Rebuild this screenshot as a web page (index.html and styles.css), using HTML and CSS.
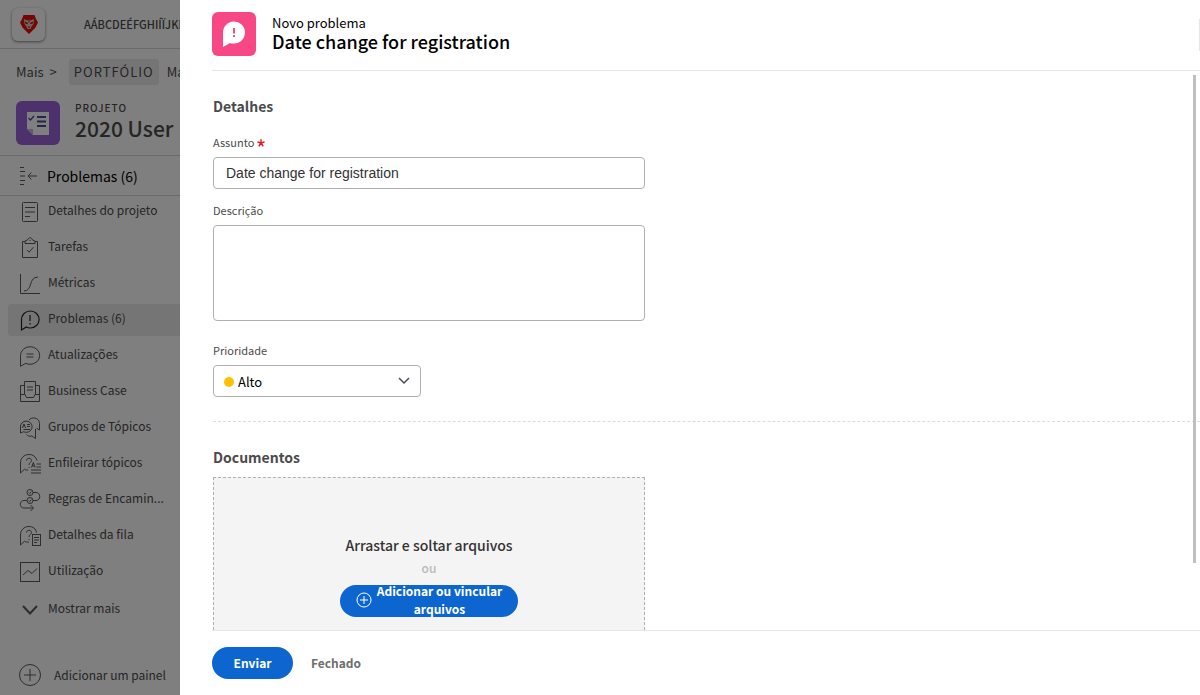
FILE: index.html
```html
<!DOCTYPE html>
<html lang="pt-BR">
<head>
<meta charset="utf-8">
<title>Novo problema</title>
<link rel="stylesheet" href="styles.css">
</head>
<body>
<div class="app">
  <aside class="page">
    <header class="topbar">
      <div class="logo">
        <svg width="18" height="20" viewBox="0 0 18 20"><path d="M3.500 1h11l1.500 4 2 3.500-2.500 5L9 20l-6.500-6.500L0 8.500 2 5z" fill="#e80c0c"/><path d="M4 5l3 1.500L9 5.500l2 1L14 5l-.5 5-2 2.500-1 2.500h-3l-1-2.500-2-2.500z" fill="#dccaca"/><path d="M4.800 7.500L8 9l-.5 1.200-2.300-.8zM13.200 7.500L10 9l.5 1.200 2.300-.8zM7.500 12.500h3L9 14.300zM8.400 5.500h1.200L9.300 9h-.6z" fill="#c80c0c"/></svg>
      </div>
      <span class="org">AÁBCDEÉFGHIÍÏJKL</span>
    </header>
    <nav class="crumbs" aria-label="Trilha">
      <a href="#">Mais</a><span class="sep">&gt;</span><a href="#" class="crumb-chip">PORTFÓLIO</a><a href="#">Ma</a>
    </nav>
    <div class="project">
      <div class="project-icon">
        <svg width="44" height="44" viewBox="0 0 44 44"><path d="M11 11h22v23H17l-6-6z" fill="#fff"/><path d="M11 28h6v6z" fill="#c9b0ee"/><path d="M12.500 17l2 2 3.500-4" fill="none" stroke="#4b4b9c" stroke-width="1.400"/><path d="M21 16h9M21 20.500h9M21 25h9" stroke="#4b4b9c" stroke-width="1.800"/></svg>
      </div>
      <div>
        <div class="project-kind">PROJETO</div>
        <div class="project-name">2020 User</div>
      </div>
    </div>
    <div class="section-head">
      <svg width="20" height="20" viewBox="0 0 20 20" class="ico"><path d="M1 1.500h4M1 5.500h5M1 10h5M1 14.500h5M1 18.500h4M18 10H9.500M12.500 6.500L9 10l3.500 3.500"/></svg>
      <span>Problemas (6)</span>
    </div>
    <nav class="menu">
      <a href="#"><svg class="ico" width="22" height="22" viewBox="0 0 22 22"><rect x="3.500" y="1.500" width="15" height="19" rx="1"/><path d="M6 6.500h10M6 11h10M6 15.500h5"/></svg><span>Detalhes do projeto</span></a>
      <a href="#"><svg class="ico" width="22" height="22" viewBox="0 0 22 22"><path d="M6 4.500H3.500v16h15v-16H16M6 6.500V4l2.500-1C9 1.500 10 .8 11 .8s2 .7 2.500 2.200L16 4v2.500zM8 13l2 2.200 4.500-5M11 3v1"/></svg><span>Tarefas</span></a>
      <a href="#"><svg class="ico" width="22" height="22" viewBox="0 0 22 22"><path d="M1.500 1v19.500H21M5 18c9 0 4-14 14-14"/></svg><span>Métricas</span></a>
      <a href="#" class="active"><svg class="ico" width="22" height="22" viewBox="0 0 22 22"><path d="M2.500 21V10.500a8.800 8.500 0 1 1 8.800 8.500c-1.600 0-2.800-.3-4-1zM11 6v6M11 14v1.500"/></svg><span>Problemas (6)</span></a>
      <a href="#"><svg class="ico" width="22" height="22" viewBox="0 0 22 22"><path d="M1.500 21.300V10.500a9.600 8.800 0 1 1 9.600 8.800c-1.700 0-3-.3-4.300-1zM7.500 9h7M7.500 12h7"/></svg><span>Atualizações</span></a>
      <a href="#"><svg class="ico" width="22" height="22" viewBox="0 0 22 22"><path d="M5.500 4.500h-4v16h19v-16h-4M1.500 13.500H6l1.500 3h7l1.500-3h4.500M5.500 13.500v-13h11v13M8 6h6M8 9h6"/></svg><span>Business Case</span></a>
      <a href="#"><svg class="ico" width="22" height="22" viewBox="0 0 22 22"><path d="M1.500 16V10a5.800 5.600 0 1 1 6 5.300c-1.200 0-1.800-.1-2.800-.6zM10 3c2-3.300 10.500-3 10.500 3.500V13l-3-1.800M16.500 12v9.500l-3.500-2.500c-2.500.5-4.500 0-5.500-1.500M3.500 11l1.500-4 1.500 4M8 7.500h3M8 9.500h3M4.500 12.500H11"/></svg><span>Grupos de Tópicos</span></a>
      <a href="#"><svg class="ico" width="22" height="22" viewBox="0 0 22 22"><path d="M9 17c-1.300.2-2.500 0-3.500-.8L1.500 20V10c0-5 3.500-8.500 8.500-8.500 4 0 7 2.300 8 6M7.500 7.500c0-3 5-3 5 0 0 2-2.500 2-2.500 4.500M10 14v1M12.500 14.500l1.800-5 1.800 5M13 13h2.500M17.500 11h4.500M17.500 14h4.500M12 17h10M12 20h10"/></svg><span>Enfileirar tópicos</span></a>
      <a href="#"><svg class="ico" width="22" height="22" viewBox="0 0 22 22"><circle cx="11" cy="3.500" r="3"/><circle cx="11" cy="11.500" r="3"/><path d="M9.800 3.500l1 1 1.500-2M9.800 11.500l1 1 1.500-2M14 3.500h3c5 0 5 8 0 8h-3M8 11.500H5c-5 0-5 7.500 0 7.500h9M11.500 16l3 3-3 3"/></svg><span>Regras de Encamin...</span></a>
      <a href="#"><svg class="ico" width="22" height="22" viewBox="0 0 22 22"><path d="M10 17c-1.500.3-3.300 0-4.500-.8L1.500 20V10c0-5 3.500-8.500 8.500-8.500 4 0 7 2.300 7.500 6M7.500 7.500c0-3 5-3 5 0 0 2-2.500 2-2.500 4.500M10 14v1"/><rect x="13.500" y="9.500" width="8" height="11"/><path d="M15 12.500h5M15 15h5M15 17.500h3"/></svg><span>Detalhes da fila</span></a>
      <a href="#"><svg class="ico" width="22" height="22" viewBox="0 0 22 22"><rect x="1.500" y="1.500" width="19" height="19"/><path d="M4 14l5-4.500 4 3 5-5"/></svg><span>Utilização</span></a>
      <a href="#" class="more"><svg class="ico ico-bold" width="22" height="22" viewBox="0 0 22 22"><path d="M4 7l7 7.500L18 7"/></svg><span>Mostrar mais</span></a>
    </nav>
    <button type="button" class="add-panel"><svg class="ico" width="24" height="24" viewBox="0 0 24 24"><circle cx="12" cy="12" r="10.500"/><path d="M12 6v12M6 12h12"/></svg><span>Adicionar um painel</span></button>
  </aside>

  <main class="dialog" role="dialog" aria-labelledby="dlg-title">
    <header class="dialog-head">
      <div class="issue-icon">
        <svg width="44" height="44" viewBox="0 0 44 44"><path d="M11 35V21a11 11 0 1 1 11 10.500c-2 0-3-.1-4-.5z" fill="#fff"/><path d="M22 16v5.500M22 23v2" stroke="#e8586a" stroke-width="2"/></svg>
      </div>
      <div>
        <div class="eyebrow">Novo problema</div>
        <h1 id="dlg-title">Date change for registration</h1>
      </div>
      <span class="head-edge"></span>
    </header>
    <form class="dialog-form">
      <div class="scroll">
        <section class="details">
          <h2>Detalhes</h2>
          <div class="field">
            <label for="subject">Assunto <svg class="req" width="8" height="8" viewBox="0 0 8 8"><path d="M4 4V.2M4 4L.4 2.900M4 4l3.600-1.100M4 4L1.800 7.400M4 4l2.200 3.400"/></svg></label>
            <input id="subject" type="text" value="Date change for registration">
          </div>
          <div class="field">
            <label for="desc">Descrição</label>
            <textarea id="desc"></textarea>
          </div>
          <div class="field">
            <label for="prio">Prioridade</label>
            <div class="select">
              <select id="prio"><option>Alto</option></select>
              <span class="dot"></span>
              <svg class="chev" width="12" height="8" viewBox="0 0 12 8"><path d="M1 1l5 5 5-5"/></svg>
            </div>
          </div>
        </section>
        <section class="documents">
          <h2>Documentos</h2>
          <div class="drop">
            <p class="drop-title">Arrastar e soltar arquivos</p>
            <p class="drop-or">ou</p>
            <button type="button" class="add-files"><svg width="16" height="16" viewBox="0 0 16 16"><circle cx="8" cy="8" r="7"/><path d="M8 4v8M4 8h8"/></svg><span>Adicionar ou vincular arquivos</span></button>
          </div>
        </section>
        <span class="thumb"></span>
      </div>
      <footer class="actions">
        <button type="submit" class="primary">Enviar</button>
        <button type="button" class="quiet">Fechado</button>
      </footer>
    </form>
  </main>
</div>
</body>
</html>
```
FILE: styles.css
```css
* { box-sizing: border-box; }
body {
  margin: 0;
  font-family: "Noto Sans CJK SC", "Noto Sans", sans-serif;
  font-size: 13px;
  line-height: 18px;
  color: #4b4b4b;
  background: #fff;
}
h1, h2, p { margin: 0; }
a { color: inherit; text-decoration: none; }
button, input, textarea, select { font: inherit; margin: 0; }
.app { display: flex; height: 100vh; overflow: hidden; }

/* dimmed page under the dialog */
.page {
  position: relative;
  flex: 0 0 180px;
  display: flex;
  flex-direction: column;
  overflow: hidden;
  white-space: nowrap;
}
.page::after {
  content: "";
  position: absolute;
  inset: 0;
  background: rgba(0, 0, 0, 0.5);
}
.topbar {
  display: flex;
  align-items: center;
  gap: 39px;
  height: 49px;
  padding-left: 12px;
  border-bottom: 1px solid #d4d4d4;
}
.logo {
  flex: none;
  display: grid;
  place-items: center;
  width: 33px;
  height: 33px;
  border-radius: 6px;
  box-shadow: 0 1px 3px rgba(0, 0, 0, 0.5);
}
.org { font-size: 11px; font-weight: 500; }
.crumbs {
  display: flex;
  align-items: center;
  height: 46px;
  padding-left: 16px;
}
.sep { margin: 0 12px 0 6px; }
.crumb-chip {
  margin-right: 8px;
  padding: 4px 5px;
  border-radius: 3px;
  background: #ebebeb;
  letter-spacing: 1px;
}
.project {
  display: flex;
  gap: 15px;
  height: 61px;
  padding: 6px 0 0 16px;
  border-bottom: 1px solid #d4d4d4;
}
.project-icon {
  flex: none;
  width: 44px;
  height: 44px;
  border-radius: 6px;
  background: #9a62d8;
}
.project-kind {
  font-size: 10px;
  font-weight: 500;
  line-height: 14px;
  letter-spacing: 1px;
}
.project-name { font-size: 21px; font-weight: 500; line-height: 26px; }
.section-head {
  display: flex;
  align-items: center;
  gap: 8px;
  height: 40px;
  padding-left: 19px;
  border-bottom: 1px solid #d4d4d4;
  font-size: 14px;
  color: #000;
}
.ico { flex: none; fill: none; stroke: #5a5a5a; stroke-width: 1; }
.ico-bold { stroke-width: 2; }
.menu { display: flex; flex-direction: column; gap: 4px; font-size: 12px; }
.menu a {
  display: flex;
  align-items: center;
  gap: 7px;
  height: 32px;
  margin-left: 8px;
  padding-left: 11px;
  border-radius: 4px 0 0 4px;
}
.menu span { padding-bottom: 4px; }
.menu .active { background: #ebebeb; }
.menu .active .ico { stroke: #222; stroke-width: 1.2; }
.menu .more { margin-top: 2px; }
.add-panel {
  display: flex;
  align-items: center;
  gap: 12px;
  margin-top: auto;
  height: 40px;
  padding: 0 0 0 18px;
  border: 0;
  background: none;
  color: inherit;
  font-size: 12px;
}

/* dialog */
.dialog {
  flex: 1;
  min-width: 0;
  display: flex;
  flex-direction: column;
}
.dialog-head {
  display: flex;
  gap: 16px;
  height: 71px;
  margin-left: 32px;
  padding-top: 12px;
  border-bottom: 1px solid #e6e6e6;
  color: #000;
}
.issue-icon {
  width: 44px;
  height: 44px;
  border-radius: 6px;
  background: #f74785;
}
.eyebrow { padding-top: 2px; }
h1 { font-size: 18px; font-weight: 500; line-height: 18px; }
.head-edge {
  width: 1px;
  height: 32px;
  margin: 7px 0 0 auto;
  background: #e6e6e6;
}
.dialog-form {
  flex: 1;
  min-height: 0;
  display: flex;
  flex-direction: column;
}
.scroll {
  position: relative;
  flex: 1;
  min-height: 0;
  overflow: hidden;
  padding-left: 33px;
}
.details {
  padding: 25px 0 24px;
  border-bottom: 1px dashed #dcdcdc;
}
h2 { font-size: 14px; font-weight: 700; line-height: 20px; }
.field { margin-top: 13px; max-width: 432px; }
h2 + .field { margin-top: 18px; }
label { display: block; height: 23px; font-size: 11px; line-height: 16px; }
.req { fill: none; stroke: #e81123; stroke-width: 1.4; }
input, textarea, select {
  display: block;
  width: 100%;
  border: 1px solid #b0b0b0;
  border-radius: 4px;
  background: #fff;
  color: #323232;
}
input {
  height: 32px;
  padding: 0 12px;
  font-family: "Liberation Sans", sans-serif;
  font-size: 14px;
}
textarea { height: 96px; resize: none; }
.field:last-child { margin-top: 21px; }
.select { position: relative; width: 208px; }
select {
  height: 32px;
  padding: 2px 24px 0;
  appearance: none;
  color: #000;
}
.dot {
  position: absolute;
  left: 11px;
  top: 12px;
  width: 10px;
  height: 10px;
  border-radius: 50%;
  background: #ffc000;
}
.chev {
  position: absolute;
  right: 11px;
  top: 12px;
  fill: none;
  stroke: #4a4e5a;
  stroke-width: 1.5;
}
.documents { padding-top: 25px; }
.drop {
  display: flex;
  flex-direction: column;
  align-items: center;
  max-width: 432px;
  height: 208px;
  margin-top: 10px;
  padding-top: 57px;
  border: 1px dashed #b0b0b0;
  background: #f4f4f4;
}
.drop-title { font-size: 14px; font-weight: 500; line-height: 20px; color: #323232; }
.drop-or { margin: 4px 0 8px; font-size: 12px; font-weight: 500; color: #b8b8b8; }
.add-files {
  display: flex;
  align-items: center;
  gap: 4px;
  width: 178px;
  height: 32px;
  padding: 0 15px 2px 16px;
  border: 0;
  border-radius: 16px;
  background: #0d66d0;
  color: #fff;
  font-size: 12px;
  font-weight: 700;
  line-height: 18px;
}
.add-files svg { flex: none; fill: none; stroke: #fff; stroke-width: 1; }
.add-files span { flex: 1; }
.thumb {
  position: absolute;
  right: 4px;
  top: 4px;
  width: 3px;
  height: 488px;
  background: #bfbfbf;
}
.actions {
  display: flex;
  align-items: center;
  gap: 18px;
  height: 65px;
  margin-left: 32px;
  border-top: 1px solid #e6e6e6;
}
.actions button { height: 32px; border: 0; border-radius: 16px; font-size: 12px; font-weight: 700; }
.primary { width: 81px; background: #0d66d0; color: #fff; }
.actions .quiet { padding: 0; background: none; color: #6e6e6e; }
```
